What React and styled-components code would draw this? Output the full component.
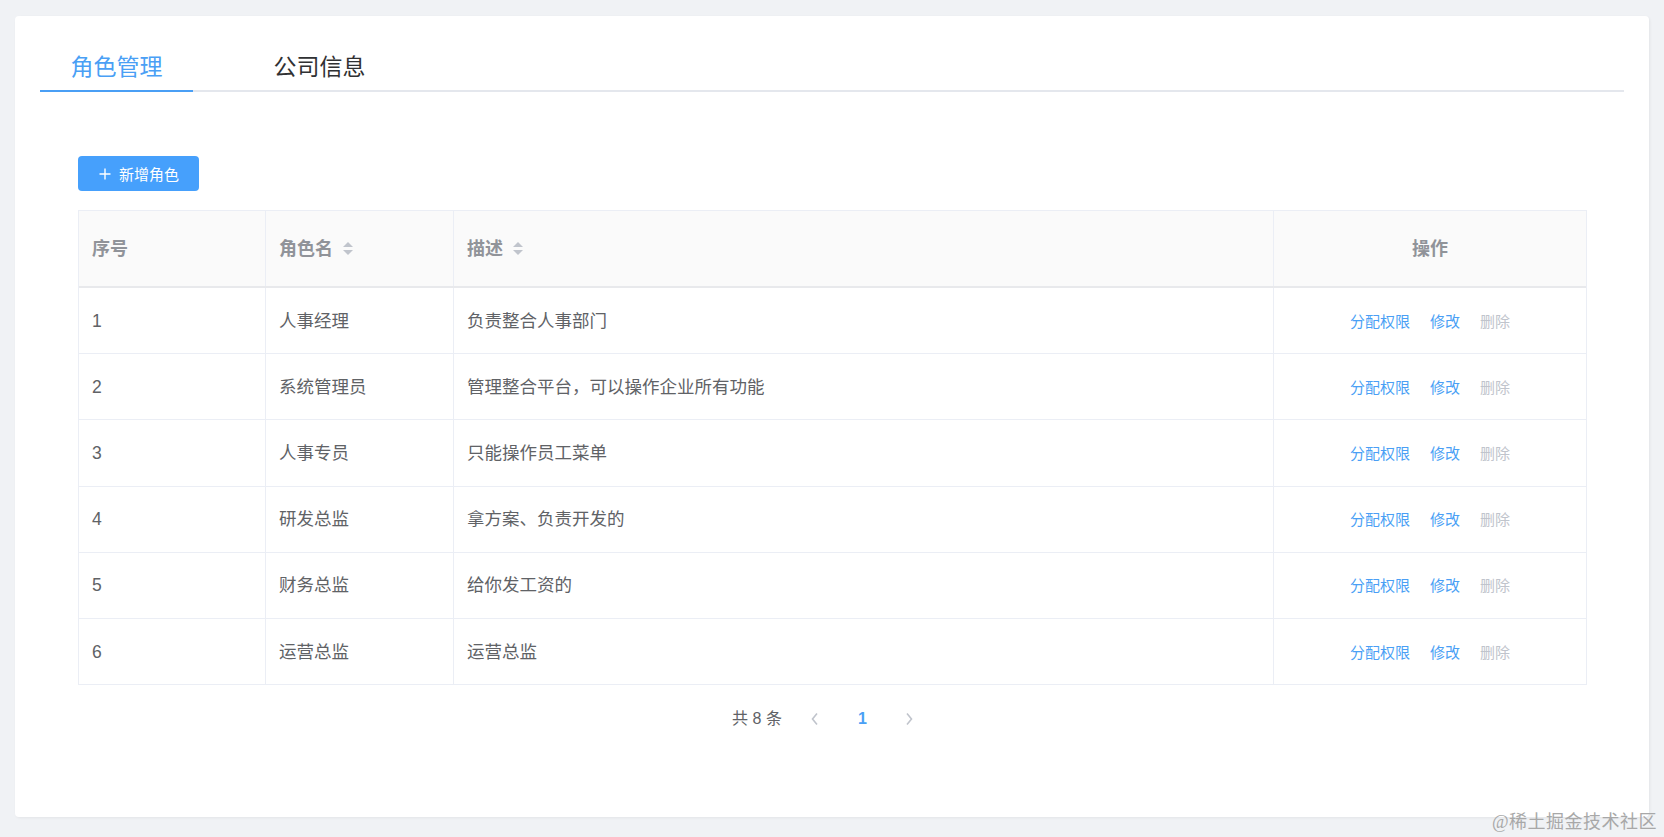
import React from 'react';
import styled, { createGlobalStyle } from 'styled-components';

const GlobalStyle = createGlobalStyle`
  html, body {
    margin: 0;
    padding: 0;
    background: #f0f2f5;
  }
  body {
    font-family: "Liberation Sans", "Noto Sans CJK SC", sans-serif;
  }
`;

const Page = styled.div`
  position: relative;
  box-sizing: border-box;
  height: 837px;
  padding: 16px 15px 20px;
`;

const Card = styled.div`
  box-sizing: border-box;
  height: 801px;
  padding: 0 25px;
  background: #fff;
  border-radius: 4px;
  box-shadow: 1px 1px 3px rgba(0, 0, 0, 0.06);
`;

const TabBar = styled.div`
  display: flex;
  gap: 50px;
  box-sizing: border-box;
  height: 76px;
  border-bottom: 2px solid #e4e7ed;
`;

const Tab = styled.div`
  box-sizing: border-box;
  width: 153px;
  height: 76px;
  padding-top: 34px;
  line-height: 30px;
  text-align: center;
  font-family: "Noto Sans CJK SC", sans-serif;
  font-size: 23px;
  color: ${p => (p.$active ? '#4a9ff5' : '#303133')};
  border-bottom: 2px solid ${p => (p.$active ? '#4a9ff5' : 'transparent')};
`;

const Content = styled.div`
  padding: 64px 37px 0 38px;
`;

const AddButton = styled.button`
  display: flex;
  align-items: center;
  gap: 8px;
  box-sizing: border-box;
  width: 121px;
  height: 35px;
  padding: 0 0 0 21px;
  border: none;
  border-radius: 4px;
  background: #46a0fc;
  color: #fff;
  font-family: "Noto Sans CJK SC", sans-serif;
  font-size: 15px;
`;

const Table = styled.div`
  margin-top: 19px;
  border: 1px solid #ebeef5;
  border-bottom: none;
`;

const Row = styled.div`
  display: grid;
  grid-template-columns: 187px 188px 820px 1fr;
  box-sizing: border-box;
  height: ${p => (p.$head ? '77px' : '66.2px')};
  background: ${p => (p.$head ? '#fafafa' : '#fff')};
  border-bottom: ${p => (p.$head ? '2px solid #e8e9ec' : '1px solid #ebeef5')};
`;

const Cell = styled.div`
  display: flex;
  align-items: center;
  justify-content: ${p => (p.$center ? 'center' : 'flex-start')};
  gap: 9px;
  box-sizing: border-box;
  padding: 0 13px;
  border-right: 1px solid #ebeef5;
  font-size: ${p => (p.$head ? '18px' : '17.5px')};
  line-height: 24px;
  font-weight: ${p => (p.$head ? 700 : 400)};
  color: ${p => (p.$head ? '#909399' : '#606266')};

  &:last-child {
    border-right: none;
  }
`;

const Actions = styled.div`
  display: flex;
  gap: 20px;
`;

const Link = styled.span`
  font-family: "Noto Sans CJK SC", sans-serif;
  font-size: 15px;
  color: ${p => (p.$disabled ? '#c0c4cc' : '#4a9ff5')};
`;

const Pager = styled.div`
  display: flex;
  justify-content: center;
  align-items: center;
  height: 36px;
  margin-top: 16px;
  line-height: 24px;
`;

const Total = styled.span`
  margin-right: 10px;
  font-size: 16px;
  color: #606266;
`;

const PageBtn = styled.div`
  display: flex;
  justify-content: center;
  align-items: center;
  width: 47px;
  height: 36px;
  font-size: 16px;
  font-weight: 700;
  color: #4a9ff5;
`;

const Watermark = styled.div`
  position: absolute;
  right: 7px;
  bottom: 4px;
  font-family: "Liberation Serif", "Noto Sans CJK SC", serif;
  font-size: 18px;
  color: #a8a8a8;
  letter-spacing: 0.5px;
`;

const SortIcon = () => (
  <svg width="12" height="15" viewBox="0 0 12 15">
    <polygon points="1,6 6,1 11,6" fill="#c0c4cc" />
    <polygon points="1,9 6,14 11,9" fill="#c0c4cc" />
  </svg>
);

const Chevron = ({ dir }) => (
  <svg width="10" height="14" viewBox="0 0 10 14">
    <polyline
      points={dir === 'left' ? '7,1.5 2.5,7 7,12.5' : '3,1.5 7.5,7 3,12.5'}
      fill="none"
      stroke="#c0c4cc"
      strokeWidth="1.6"
    />
  </svg>
);

const roles = [
  ['1', '人事经理', '负责整合人事部门'],
  ['2', '系统管理员', '管理整合平台，可以操作企业所有功能'],
  ['3', '人事专员', '只能操作员工菜单'],
  ['4', '研发总监', '拿方案、负责开发的'],
  ['5', '财务总监', '给你发工资的'],
  ['6', '运营总监', '运营总监'],
];

export default function App() {
  return (
    <Page>
      <GlobalStyle />
      <Card>
        <TabBar>
          <Tab $active>角色管理</Tab>
          <Tab>公司信息</Tab>
        </TabBar>
        <Content>
          <AddButton>
            <svg width="12" height="12" viewBox="0 0 12 12">
              <path d="M6 0.5V11.5M0.5 6H11.5" stroke="#fff" strokeWidth="1.4" />
            </svg>
            新增角色
          </AddButton>
          <Table>
            <Row $head>
              <Cell $head>序号</Cell>
              <Cell $head>
                角色名 <SortIcon />
              </Cell>
              <Cell $head>
                描述 <SortIcon />
              </Cell>
              <Cell $head $center>操作</Cell>
            </Row>
            {roles.map(([no, name, desc]) => (
              <Row key={no}>
                <Cell>{no}</Cell>
                <Cell>{name}</Cell>
                <Cell>{desc}</Cell>
                <Cell $center>
                  <Actions>
                    <Link>分配权限</Link>
                    <Link>修改</Link>
                    <Link $disabled>删除</Link>
                  </Actions>
                </Cell>
              </Row>
            ))}
          </Table>
          <Pager>
            <Total>共 8 条</Total>
            <PageBtn>
              <Chevron dir="left" />
            </PageBtn>
            <PageBtn>1</PageBtn>
            <PageBtn>
              <Chevron dir="right" />
            </PageBtn>
          </Pager>
        </Content>
      </Card>
      <Watermark>@稀土掘金技术社区</Watermark>
    </Page>
  );
}
